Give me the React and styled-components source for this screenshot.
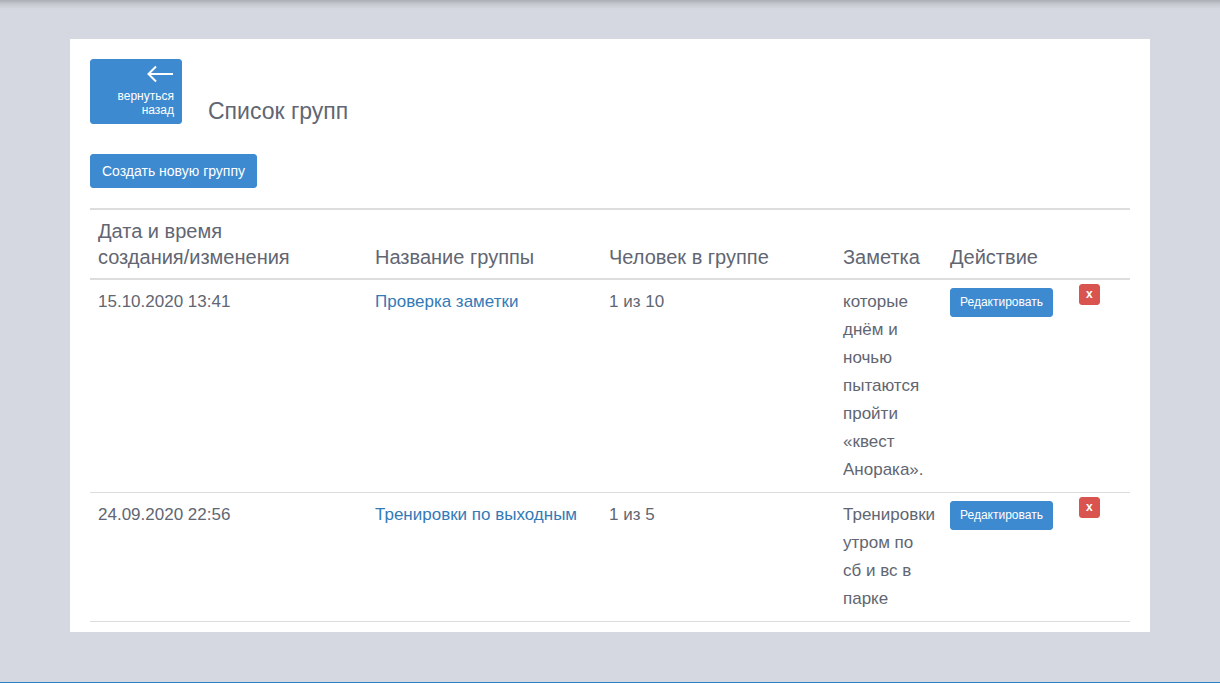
import React from 'react';
import styled, { createGlobalStyle } from 'styled-components';

const GlobalStyle = createGlobalStyle`
  *, *::before, *::after {
    box-sizing: border-box;
  }

  body {
    margin: 0;
    background-color: #d5d8e0;
    color: #616672;
    font-family: "Liberation Sans", Arial, sans-serif;
    font-size: 17px;
    line-height: 28px;
  }
`;

const Page = styled.div`
  min-height: 100vh;
  padding: 39px 20px;
  border-bottom: 1px solid #2b7fc3;
  background-image: linear-gradient(rgba(0, 0, 0, 0.2), rgba(0, 0, 0, 0.08) 4px, transparent 9px);
`;

const Card = styled.main`
  max-width: 1080px;
  margin: 0 auto;
  padding: 20px 20px 10px;
  background-color: #fff;
`;

const Header = styled.header`
  display: flex;
  align-items: flex-end;
  gap: 26px;
  margin-bottom: 30px;
`;

const Title = styled.h1`
  margin: 0;
  font-size: 23px;
  font-weight: normal;
  line-height: 26px;
`;

const Button = styled.button`
  padding: ${({ $small }) => ($small ? '5px 9px' : '6px 11px')};
  background-color: #3d8ad0;
  color: #fff;
  border: 1px solid #3d8ad0;
  border-radius: 3px;
  font-family: "Liberation Sans", Arial, sans-serif;
  font-size: ${({ $small }) => ($small ? '12px' : '14px')};
  line-height: ${({ $small }) => ($small ? '17px' : '20px')};
  white-space: nowrap;
  vertical-align: top;
  cursor: pointer;

  &:hover {
    background-color: #2e75b6;
  }
`;

const BackButton = styled(Button)`
  display: flex;
  flex-direction: column;
  align-items: flex-end;
  width: 92px;
  padding: 5px 7px 6px;
  font-size: 12px;
  line-height: 14px;
  text-align: right;

  svg {
    margin-bottom: 6px;
  }
`;

const DeleteButton = styled(Button)`
  padding: 1px 6px;
  background-color: #d9534f;
  border-color: #d9534f;
  font-weight: bold;
  font-size: 12px;
  line-height: 17px;

  &:hover {
    background-color: #c9302c;
  }
`;

const Table = styled.table`
  width: 100%;
  margin-top: 20px;
  border-collapse: separate;
  border-spacing: 0;
  border-top: 2px solid #ddd;
  table-layout: fixed;
`;

const Col = styled.col`
  width: ${({ $width }) => $width};
`;

const HeadCell = styled.th`
  padding: 8px;
  border-bottom: 2px solid #ddd;
  font-size: 20px;
  font-weight: normal;
  line-height: 26px;
  text-align: left;
  vertical-align: bottom;
`;

const Cell = styled.td`
  padding: ${({ $tight }) => ($tight ? '4px 8px' : '8px')};
  border-bottom: 1px solid #ddd;
  vertical-align: top;
`;

const GroupLink = styled.a`
  color: #337ab7;
  text-decoration: none;

  &:hover {
    text-decoration: underline;
  }
`;

const groups = [
  {
    id: 1,
    date: '15.10.2020 13:41',
    name: 'Проверка заметки',
    people: '1 из 10',
    note: 'которые днём и ночью пытаются пройти «квест Анорака».',
  },
  {
    id: 2,
    date: '24.09.2020 22:56',
    name: 'Тренировки по выходным',
    people: '1 из 5',
    note: 'Тренировки утром по сб и вс в парке',
  },
];

const columns = ['277px', '234px', '234px', '107px', '129px', 'auto'];

const BackArrow = () => (
  <svg width="28" height="18" viewBox="0 0 28 18" fill="none" stroke="#fff" strokeWidth="2" aria-hidden="true">
    <path d="M27 9H3M10 1.5L2.5 9L10 16.5" />
  </svg>
);

const GroupRow = ({ group }) => (
  <tr>
    <Cell>{group.date}</Cell>
    <Cell>
      <GroupLink href="#">{group.name}</GroupLink>
    </Cell>
    <Cell>{group.people}</Cell>
    <Cell>{group.note}</Cell>
    <Cell>
      <Button type="button" $small>Редактировать</Button>
    </Cell>
    <Cell $tight>
      <DeleteButton type="button">x</DeleteButton>
    </Cell>
  </tr>
);

const App = () => (
  <>
    <GlobalStyle />
    <Page>
      <Card>
        <Header>
          <BackButton type="button">
            <BackArrow />
            <span>вернуться<br />назад</span>
          </BackButton>
          <Title>Список групп</Title>
        </Header>
        <Button type="button">Создать новую группу</Button>
        <Table>
          <colgroup>
            {columns.map((width, index) => (
              <Col key={index} $width={width} />
            ))}
          </colgroup>
          <thead>
            <tr>
              <HeadCell>Дата и время<br />создания/изменения</HeadCell>
              <HeadCell>Название группы</HeadCell>
              <HeadCell>Человек в группе</HeadCell>
              <HeadCell>Заметка</HeadCell>
              <HeadCell colSpan={2}>Действие</HeadCell>
            </tr>
          </thead>
          <tbody>
            {groups.map((group) => (
              <GroupRow key={group.id} group={group} />
            ))}
          </tbody>
        </Table>
      </Card>
    </Page>
  </>
);

export default App;
